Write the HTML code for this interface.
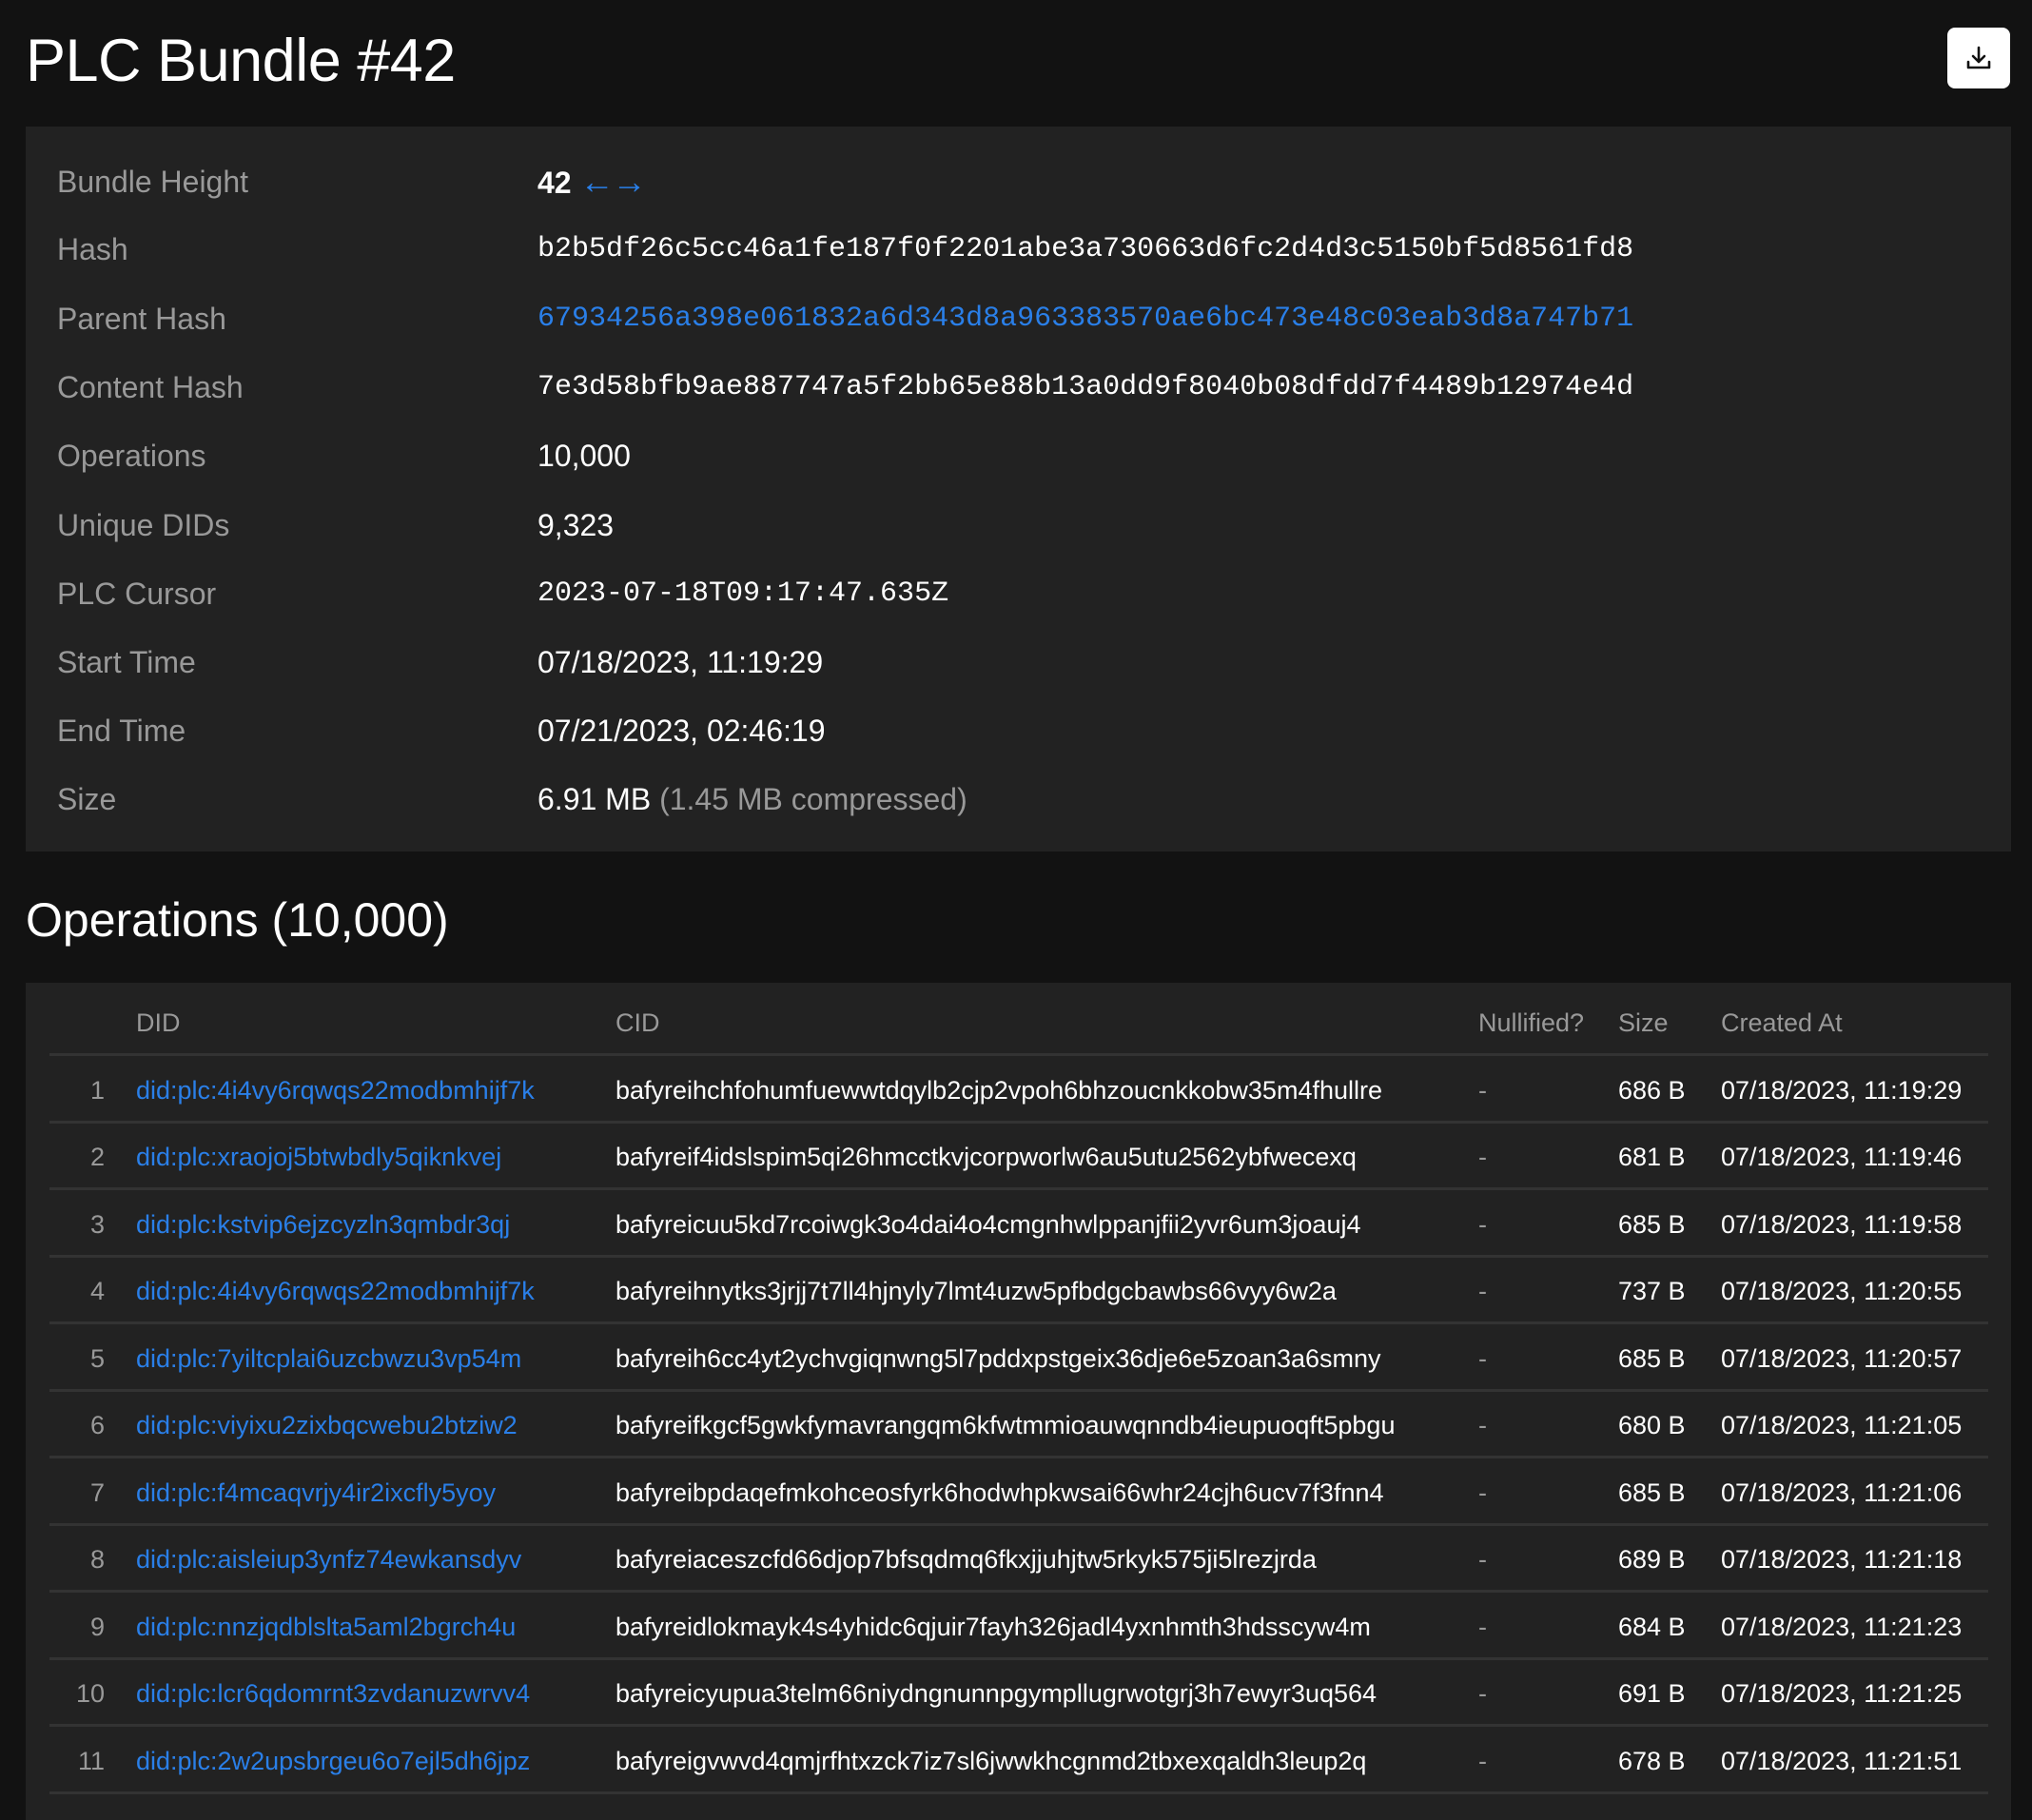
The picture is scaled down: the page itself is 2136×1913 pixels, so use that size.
<!DOCTYPE html>
<html><head><meta charset="utf-8"><style>
*{margin:0;padding:0;box-sizing:border-box}
body{width:2136px;height:1896px;background:#121212;color:#fff;font-family:"Liberation Sans",sans-serif;position:relative;overflow:hidden}
h1{position:absolute;left:27px;top:28px;font-size:63px;font-weight:400;letter-spacing:-0.5px}
.dl{position:absolute;left:2047px;top:29px;width:66px;height:64px;background:#fff;border-radius:8px}
.dl svg{position:absolute;left:19px;top:18px}
.panel{position:absolute;left:27px;top:133px;width:2087px;height:762px;background:#222}
.row{position:absolute;left:33px;height:40px;line-height:40px;font-size:32px}
.lab{color:#999;position:absolute;left:0;white-space:nowrap}
.val{position:absolute;left:505px;white-space:nowrap}
.mono{font-family:"Liberation Mono",monospace;font-size:30px}
.link{color:#2a7fe8}
.gray{color:#999}
.arr{font-size:36px;font-weight:700;letter-spacing:-2px}
h2{position:absolute;left:27px;top:938px;font-size:50px;font-weight:400}
.tbl{position:absolute;left:27px;top:1033px;width:2087px;height:880px;background:#222}
.tr{position:absolute;left:25px;width:2038px;height:70px;border-bottom:3px solid #333;font-size:27px}
.tr span{position:absolute;top:0;line-height:70px;white-space:nowrap}
.c0{right:1980px;text-align:right;color:#999}
.c1{left:91px}.c2{left:595px}.c3{left:1502px;color:#999}.c4{left:1649px}.c5{left:1757px}
.hd span{color:#999}
</style></head><body>
<h1>PLC Bundle #42</h1>
<div class="dl"><svg width="28" height="28" viewBox="0 0 28 28" fill="none" stroke="#111" stroke-width="2.6" stroke-linecap="round" stroke-linejoin="round"><path d="M14 3v15M8 12l6 6 6-6M3 18v6h22v-6"/></svg></div>
<div class="panel">
<div class="row" style="top:38px"><span class="lab">Bundle Height</span><span class="val"><b>42</b> <span class="link arr">←→</span></span></div>
<div class="row" style="top:109px"><span class="lab">Hash</span><span class="val mono">b2b5df26c5cc46a1fe187f0f2201abe3a730663d6fc2d4d3c5150bf5d8561fd8</span></div>
<div class="row" style="top:182px"><span class="lab">Parent Hash</span><span class="val mono link">67934256a398e061832a6d343d8a963383570ae6bc473e48c03eab3d8a747b71</span></div>
<div class="row" style="top:254px"><span class="lab">Content Hash</span><span class="val mono">7e3d58bfb9ae887747a5f2bb65e88b13a0dd9f8040b08dfdd7f4489b12974e4d</span></div>
<div class="row" style="top:326px"><span class="lab">Operations</span><span class="val">10,000</span></div>
<div class="row" style="top:399px"><span class="lab">Unique DIDs</span><span class="val">9,323</span></div>
<div class="row" style="top:471px"><span class="lab">PLC Cursor</span><span class="val mono">2023-07-18T09:17:47.635Z</span></div>
<div class="row" style="top:543px"><span class="lab">Start Time</span><span class="val">07/18/2023, 11:19:29</span></div>
<div class="row" style="top:615px"><span class="lab">End Time</span><span class="val">07/21/2023, 02:46:19</span></div>
<div class="row" style="top:687px"><span class="lab">Size</span><span class="val">6.91 MB <span class="gray">(1.45 MB compressed)</span></span></div>
</div>
<h2>Operations (10,000)</h2>
<div class="tbl">
<div class="tr hd" style="top:7px"><span class="c1">DID</span><span class="c2">CID</span><span class="c3">Nullified?</span><span class="c4">Size</span><span class="c5">Created At</span></div>
<div class="tr" style="top:78px"><span class="c0">1</span><span class="c1 link">did:plc:4i4vy6rqwqs22modbmhijf7k</span><span class="c2">bafyreihchfohumfuewwtdqylb2cjp2vpoh6bhzoucnkkobw35m4fhullre</span><span class="c3">-</span><span class="c4">686 B</span><span class="c5">07/18/2023, 11:19:29</span></div>
<div class="tr" style="top:148px"><span class="c0">2</span><span class="c1 link">did:plc:xraojoj5btwbdly5qiknkvej</span><span class="c2">bafyreif4idslspim5qi26hmcctkvjcorpworlw6au5utu2562ybfwecexq</span><span class="c3">-</span><span class="c4">681 B</span><span class="c5">07/18/2023, 11:19:46</span></div>
<div class="tr" style="top:219px"><span class="c0">3</span><span class="c1 link">did:plc:kstvip6ejzcyzln3qmbdr3qj</span><span class="c2">bafyreicuu5kd7rcoiwgk3o4dai4o4cmgnhwlppanjfii2yvr6um3joauj4</span><span class="c3">-</span><span class="c4">685 B</span><span class="c5">07/18/2023, 11:19:58</span></div>
<div class="tr" style="top:289px"><span class="c0">4</span><span class="c1 link">did:plc:4i4vy6rqwqs22modbmhijf7k</span><span class="c2">bafyreihnytks3jrjj7t7ll4hjnyly7lmt4uzw5pfbdgcbawbs66vyy6w2a</span><span class="c3">-</span><span class="c4">737 B</span><span class="c5">07/18/2023, 11:20:55</span></div>
<div class="tr" style="top:360px"><span class="c0">5</span><span class="c1 link">did:plc:7yiltcplai6uzcbwzu3vp54m</span><span class="c2">bafyreih6cc4yt2ychvgiqnwng5l7pddxpstgeix36dje6e5zoan3a6smny</span><span class="c3">-</span><span class="c4">685 B</span><span class="c5">07/18/2023, 11:20:57</span></div>
<div class="tr" style="top:430px"><span class="c0">6</span><span class="c1 link">did:plc:viyixu2zixbqcwebu2btziw2</span><span class="c2">bafyreifkgcf5gwkfymavrangqm6kfwtmmioauwqnndb4ieupuoqft5pbgu</span><span class="c3">-</span><span class="c4">680 B</span><span class="c5">07/18/2023, 11:21:05</span></div>
<div class="tr" style="top:501px"><span class="c0">7</span><span class="c1 link">did:plc:f4mcaqvrjy4ir2ixcfly5yoy</span><span class="c2">bafyreibpdaqefmkohceosfyrk6hodwhpkwsai66whr24cjh6ucv7f3fnn4</span><span class="c3">-</span><span class="c4">685 B</span><span class="c5">07/18/2023, 11:21:06</span></div>
<div class="tr" style="top:571px"><span class="c0">8</span><span class="c1 link">did:plc:aisleiup3ynfz74ewkansdyv</span><span class="c2">bafyreiaceszcfd66djop7bfsqdmq6fkxjjuhjtw5rkyk575ji5lrezjrda</span><span class="c3">-</span><span class="c4">689 B</span><span class="c5">07/18/2023, 11:21:18</span></div>
<div class="tr" style="top:642px"><span class="c0">9</span><span class="c1 link">did:plc:nnzjqdblslta5aml2bgrch4u</span><span class="c2">bafyreidlokmayk4s4yhidc6qjuir7fayh326jadl4yxnhmth3hdsscyw4m</span><span class="c3">-</span><span class="c4">684 B</span><span class="c5">07/18/2023, 11:21:23</span></div>
<div class="tr" style="top:712px"><span class="c0">10</span><span class="c1 link">did:plc:lcr6qdomrnt3zvdanuzwrvv4</span><span class="c2">bafyreicyupua3telm66niydngnunnpgympllugrwotgrj3h7ewyr3uq564</span><span class="c3">-</span><span class="c4">691 B</span><span class="c5">07/18/2023, 11:21:25</span></div>
<div class="tr" style="top:783px"><span class="c0">11</span><span class="c1 link">did:plc:2w2upsbrgeu6o7ejl5dh6jpz</span><span class="c2">bafyreigvwvd4qmjrfhtxzck7iz7sl6jwwkhcgnmd2tbxexqaldh3leup2q</span><span class="c3">-</span><span class="c4">678 B</span><span class="c5">07/18/2023, 11:21:51</span></div>
</div>
</body></html>
